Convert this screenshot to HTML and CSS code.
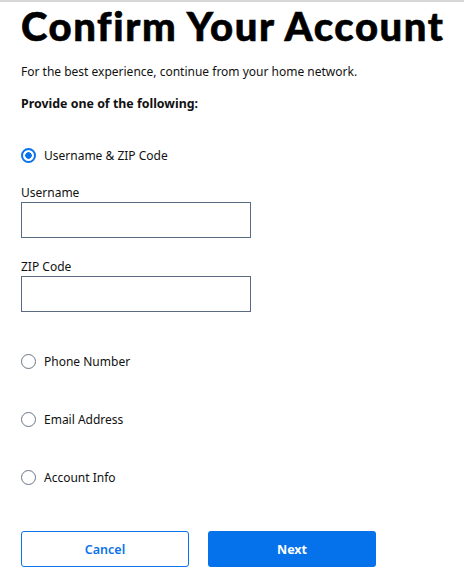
FILE: index.html
```html
<!DOCTYPE html>
<html lang="en">

<head>
    <meta charset="UTF-8">
    <meta name="viewport" content="width=device-width, initial-scale=1.0">
    <link rel="stylesheet" href="styles.css">
    <title>Confirm Your Account</title>
</head>

<body>
    <div class="page">
        <h1 class="page-title">Confirm Your Account</h1>
        <p class="intro">For the best experience, continue from your home network.</p>
        <p class="prompt">Provide one of the following:</p>

        <form class="verify-form">
            <label class="option option-first">
                <input type="radio" name="method" value="username" checked>
                <span>Username &amp; ZIP Code</span>
            </label>

            <div class="field field-first">
                <label for="username">Username</label>
                <input type="text" id="username">
            </div>
            <div class="field">
                <label for="zip">ZIP Code</label>
                <input type="text" id="zip">
            </div>

            <label class="option option-after-fields">
                <input type="radio" name="method" value="phone">
                <span>Phone Number</span>
            </label>
            <label class="option">
                <input type="radio" name="method" value="email">
                <span>Email Address</span>
            </label>
            <label class="option">
                <input type="radio" name="method" value="account">
                <span>Account Info</span>
            </label>

            <div class="button-row">
                <button type="button" class="btn btn-secondary">Cancel</button>
                <button type="submit" class="btn btn-primary">Next</button>
            </div>
        </form>
    </div>
</body>

</html>
```

FILE: styles.css
```css
* {
    margin: 0;
    padding: 0;
    box-sizing: border-box;
}

body {
    font-family: 'Noto Sans', 'Open Sans', sans-serif;
    font-size: 12px;
    color: #111111;
    background-color: #ffffff;
    border-top: 2px solid #d6d6d6;
}

.page {
    padding: 0 21px;
}

/* Header */
.page-title {
    font-family: 'Lato', 'Noto Sans', sans-serif;
    font-size: 40px;
    font-weight: 900;
    line-height: 48px;
    letter-spacing: 1.6px;
    color: #000000;
    -webkit-text-stroke: 0.6px #000000;
    white-space: nowrap;
}

.intro {
    margin-top: 13px;
    line-height: 18px;
}

.prompt {
    margin-top: 14px;
    line-height: 18px;
    font-size: 12.4px;
    font-weight: 700;
}

/* Form */
.verify-form {
    display: flex;
    flex-direction: column;
}

.option {
    display: flex;
    align-items: center;
    gap: 8px;
    height: 20px;
    margin-top: 38px;
    cursor: pointer;
}

.option-first {
    margin-top: 32px;
}

.option-after-fields {
    margin-top: 39px;
}

.option input {
    appearance: none;
    width: 15px;
    height: 15px;
    border: 1px solid #6b7585;
    border-radius: 50%;
    background-color: #ffffff;
    flex-shrink: 0;
}

.option input:checked {
    border: 2px solid #0a72ea;
    background: radial-gradient(circle, #0a72ea 0 3px, #ffffff 3.5px);
}

.field {
    display: flex;
    flex-direction: column;
    margin-top: 20px;
}

.field-first {
    margin-top: 19px;
}

.field label {
    line-height: 18px;
}

.field input {
    width: 230px;
    height: 36px;
    border: 1px solid #5a6a80;
    padding: 0 8px;
    font: inherit;
}

/* Buttons */
.button-row {
    display: flex;
    gap: 19px;
    margin-top: 44px;
}

.btn {
    width: 168px;
    height: 36px;
    border-radius: 3px;
    font-family: inherit;
    font-size: 12.5px;
    cursor: pointer;
}

.btn-secondary {
    border: 1px solid #0a72ea;
    background-color: #ffffff;
    color: #0a72ea;
    font-weight: 600;
}

.btn-primary {
    border: none;
    background-color: #0572eb;
    color: #ffffff;
    font-weight: 700;
}
```
